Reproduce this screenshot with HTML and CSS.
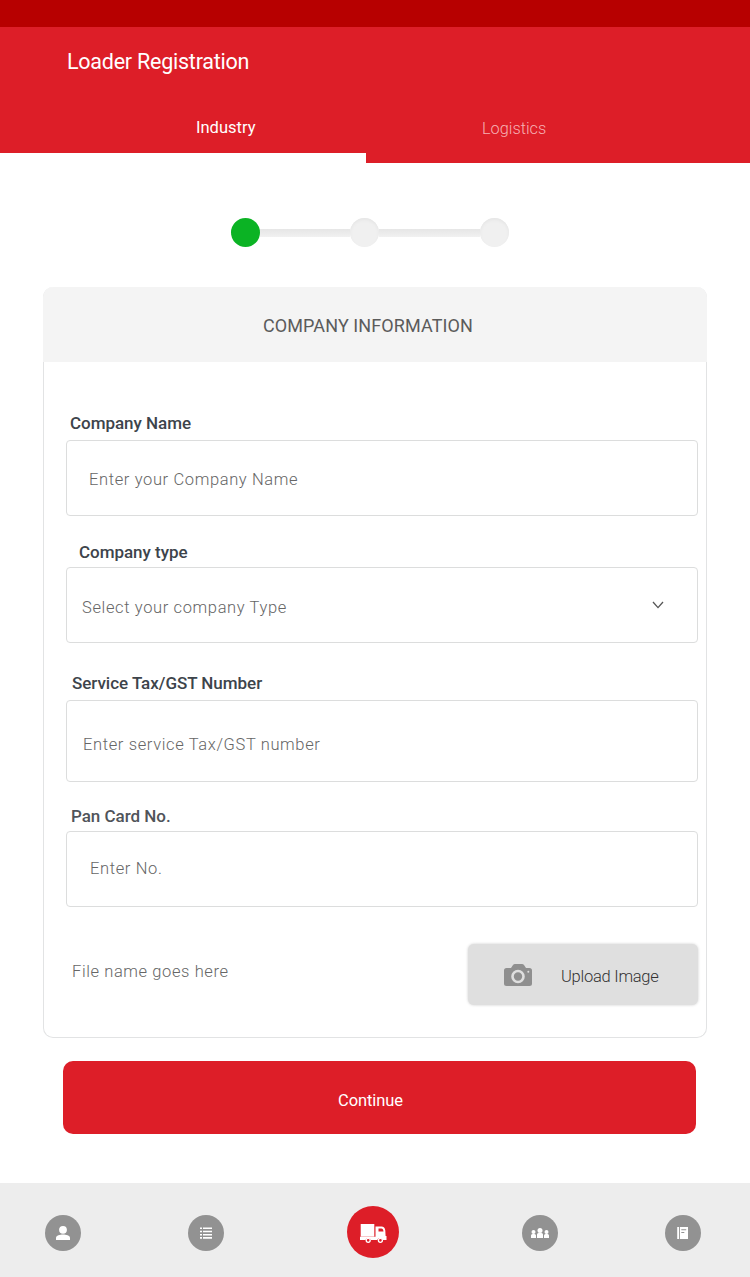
FILE: index.html
```html
<!DOCTYPE html>
<html lang="en">
<head>
<meta charset="utf-8">
<title>Loader Registration</title>
<link rel="stylesheet" href="styles.css">
</head>
<body>
<div class="status-bar"></div>
<header class="header">
  <h1 class="title"><span>Loader Registration</span></h1>
  <nav class="tabs">
    <a class="tab tab-active"><span>Industry</span></a>
    <a class="tab"><span>Logistics</span></a>
  </nav>
</header>
<main class="main">
  <div class="stepper">
    <span class="step step-done"></span>
    <span class="line line-first"></span>
    <span class="step"></span>
    <span class="line"></span>
    <span class="step"></span>
  </div>
  <section class="card">
    <h2 class="card-head"><span>COMPANY INFORMATION</span></h2>
    <div class="card-body">
      <div class="field field-name">
        <div class="label"><span>Company Name</span></div>
        <div class="box"><span>Enter your Company Name</span></div>
      </div>
      <div class="field field-type">
        <div class="label"><span>Company type</span></div>
        <div class="box"><span>Select your company Type</span>
          <svg class="chevron" viewBox="0 0 12 8"><path d="M1 1l5 5.600L11 1"/></svg>
        </div>
      </div>
      <div class="field field-tax">
        <div class="label"><span>Service Tax/GST Number</span></div>
        <div class="box"><span>Enter service Tax/GST number</span></div>
      </div>
      <div class="field field-pan">
        <div class="label"><span>Pan Card No.</span></div>
        <div class="box"><span>Enter No.</span></div>
      </div>
      <div class="upload-row">
        <span class="file-name">File name goes here</span>
        <div class="upload">
          <svg class="camera" viewBox="0 0 28 23"><path fill="#8f8f8f" d="M2.500 4H7l2-3q.7-1 2-1h7q1.300 0 2 1l2 3h3.500Q28 4 28 6.500v13q0 2.500-2.500 2.500h-23Q0 22 0 19.500v-13Q0 4 2.500 4z"/><circle cx="14" cy="12.500" r="5.500" fill="none" stroke="#dfdfdf" stroke-width="2.600"/><circle cx="24.300" cy="7.800" r="1" fill="#dfdfdf"/></svg>
          <span class="upload-text">Upload Image</span>
        </div>
      </div>
    </div>
  </section>
  <div class="continue"><span>Continue</span></div>
</main>
<nav class="bottom-nav">
  <a class="nav-item"><svg viewBox="0 0 36 36"><circle cx="18" cy="14.800" r="3.900"/><path d="M11 25v-2.200c0-2.300 4-3.200 7-3.200s7 .9 7 3.200V25z"/></svg></a>
  <a class="nav-item nav-list"><svg viewBox="0 0 36 36"><path d="M12 12.500h2v1.600h-2zm3 0h9v1.600h-9zM12 15.700h2v1.600h-2zm3 0h9v1.600h-9zM12 18.900h2v1.600h-2zm3 0h9v1.600h-9zM12 22.100h2v1.600h-2zm3 0h9v1.600h-9z"/></svg></a>
  <a class="nav-item nav-main"><svg viewBox="0 0 52 52"><path d="M13.700 18h13.600v12.500H13.700zM28.500 20.500h6c2 0 3.600 1.500 3.800 4l.3 5.500h.9v4h-3.700a3 3 0 0 0-5.600 0H24a3 3 0 0 0-5.600 0H13v-3.200h15.500z"/><path fill="#dd1e28" d="M31.500 22.500h2.800c1.300 0 2 1.100 2.200 3h-5z"/><circle cx="21.200" cy="34.300" r="2" fill="#dd1e28" stroke="#fff" stroke-width="1.300"/><circle cx="33.400" cy="34.300" r="2" fill="#dd1e28" stroke="#fff" stroke-width="1.300"/></svg></a>
  <a class="nav-item nav-group"><svg viewBox="0 0 36 36"><circle cx="11.500" cy="16.900" r="2"/><circle cx="18" cy="15.500" r="2.500"/><circle cx="24.500" cy="16.900" r="2"/><path d="M9 23v-2.500q0-1.500 1.500-1.500h2q1.500 0 1.500 1.500V23zm6 0v-3.500q0-1.500 1.500-1.500h3q1.500 0 1.500 1.500V23zm7 0v-2.500q0-1.500 1.500-1.500h2q1.500 0 1.500 1.500V23z"/></svg></a>
  <a class="nav-item"><svg viewBox="0 0 36 36"><path d="M12.200 12H14v12h-1.800zM14.900 12H23v12h-8.100z"/><path fill="#929292" d="M16.300 14.200h4.900v1h-4.900zm0 2.700h3v1h-3z"/></svg></a>
</nav>
</body>
</html>
```

FILE: styles.css
```css
* { box-sizing: border-box; }
body {
  margin: 0;
  width: 750px;
  height: 1277px;
  display: flex;
  flex-direction: column;
  background: #fff;
  font-family: Roboto, "Liberation Sans", sans-serif;
  font-size: 16px;
}
.status-bar { height: 27px; background: #b70000; }
.header {
  height: 136px;
  background: linear-gradient(#dd1e28, #dd1e28) top / 100% 126px no-repeat;
}
.title {
  margin: 0;
  height: 68px;
  padding: 22px 0 0 67px;
  font-size: 21.5px;
  line-height: 26px;
  font-weight: 400;
  letter-spacing: -.24px;
  color: #fff;
}
.tabs { display: flex; height: 68px; }
.tab {
  flex: 1;
  padding: 24px 0 0 116px;
  font-size: 16.3px;
  line-height: 20px;
  font-weight: 300;
  color: #f6b0b3;
  background: #dd1e28;
}
.tab-active {
  flex: 0 0 366px;
  padding: 23px 0 0 196px;
  font-size: 16.5px;
  font-weight: 400;
  color: #fff;
  background: none;
}
.main { flex: 1; display: flex; flex-direction: column; }
.stepper {
  display: flex;
  align-items: center;
  height: 29px;
  margin: 55px 0 40px 231px;
}
.step {
  width: 29px;
  height: 29px;
  border-radius: 50%;
  background: #f0f0f0;
  box-shadow: inset 0 2px 3px #e6e6e6;
}
.step-done { background: #0bb324; box-shadow: none; }
.line {
  width: 100.5px;
  height: 8px;
  background: linear-gradient(#e6e6e6, #f1f1f1);
}
.line-first { width: 90px; }
.card {
  width: 664px;
  height: 751px;
  margin-left: 43px;
  border: 1px solid #e2e3e4;
  border-top: 0;
  border-radius: 10px;
}
.card-head {
  height: 75px;
  margin: 0 -1px;
  padding: 27px 0 0 220px;
  border-radius: 10px 10px 0 0;
  background: #f4f4f4;
  font-size: 18px;
  line-height: 24px;
  font-weight: 400;
  letter-spacing: .1px;
  color: #5b5b5b;
}
.card-body { padding: 0 8px 0 22px; }
.label { font-size: 17px; line-height: 20px; font-weight: 500; letter-spacing: -.03px; color: #3d444b; }
.box {
  display: flex;
  align-items: flex-start;
  justify-content: space-between;
  height: 76px;
  border: 1px solid #dcdddd;
  border-radius: 4px;
  font-size: 16.5px;
  line-height: 20px;
  font-weight: 300;
  letter-spacing: .63px;
  color: #666;
}
.field-name { padding-top: 51px; }
.field-name .label { height: 27px; padding-left: 4px; }
.field-name .box { padding: 29px 0 0 22px; }
.field-type { padding-top: 26px; }
.field-type .label { height: 25px; padding-left: 13px; }
.field-type .box { padding: 30px 33px 0 15px; }
.field-tax { padding-top: 30px; }
.field-tax .label { height: 27px; padding-left: 6px; }
.field-tax .box { height: 82px; padding: 34px 0 0 16px; }
.field-pan { padding-top: 24px; }
.field-pan .label { height: 25px; padding-left: 5px; color: #50545a; }
.field-pan .box { padding: 27px 0 0 23px; }
.chevron {
  width: 12px;
  height: 8px;
  margin-top: 3px;
  fill: none;
  stroke: #555;
  stroke-width: 1.3;
}
.upload-row { display: flex; justify-content: space-between; padding: 37px 0 0 6px; }
.file-name {
  padding-top: 18px;
  font-size: 16.5px;
  line-height: 20px;
  font-weight: 300;
  letter-spacing: .6px;
  color: #666;
}
.upload {
  display: flex;
  width: 230px;
  height: 61px;
  padding: 20px 0 0 36px;
  border-radius: 6px;
  background: #dfdfdf;
  box-shadow: 0 0 3px rgba(0, 0, 0, .2);
  font-size: 16.5px;
  line-height: 24px;
  font-weight: 300;
  letter-spacing: -.25px;
  color: #333;
}
.upload-text { padding-top: 1px; }
.camera { width: 28px; height: 23px; margin-right: 29px; }
.continue {
  width: 633px;
  height: 73px;
  margin: 23px 0 0 63px;
  padding: 30px 0 0 275px;
  border-radius: 10px;
  background: #dd1e28;
  font-size: 16.5px;
  line-height: 20px;
  font-weight: 400;
  letter-spacing: -.1px;
  color: #fff;
}
.bottom-nav {
  display: flex;
  align-items: center;
  justify-content: space-between;
  height: 94px;
  padding: 5px 49px 0 45px;
  background: #ededed;
}
.nav-item { width: 36px; height: 36px; border-radius: 50%; background: #929292; }
.nav-list { margin: 0 16px 0 0; }
.nav-group { margin: 0 0 0 16px; }
.nav-item svg { display: block; width: 100%; height: 100%; fill: #fff; }
.nav-main { width: 52px; height: 52px; margin-bottom: 2px; background: #dd1e28; }
```
